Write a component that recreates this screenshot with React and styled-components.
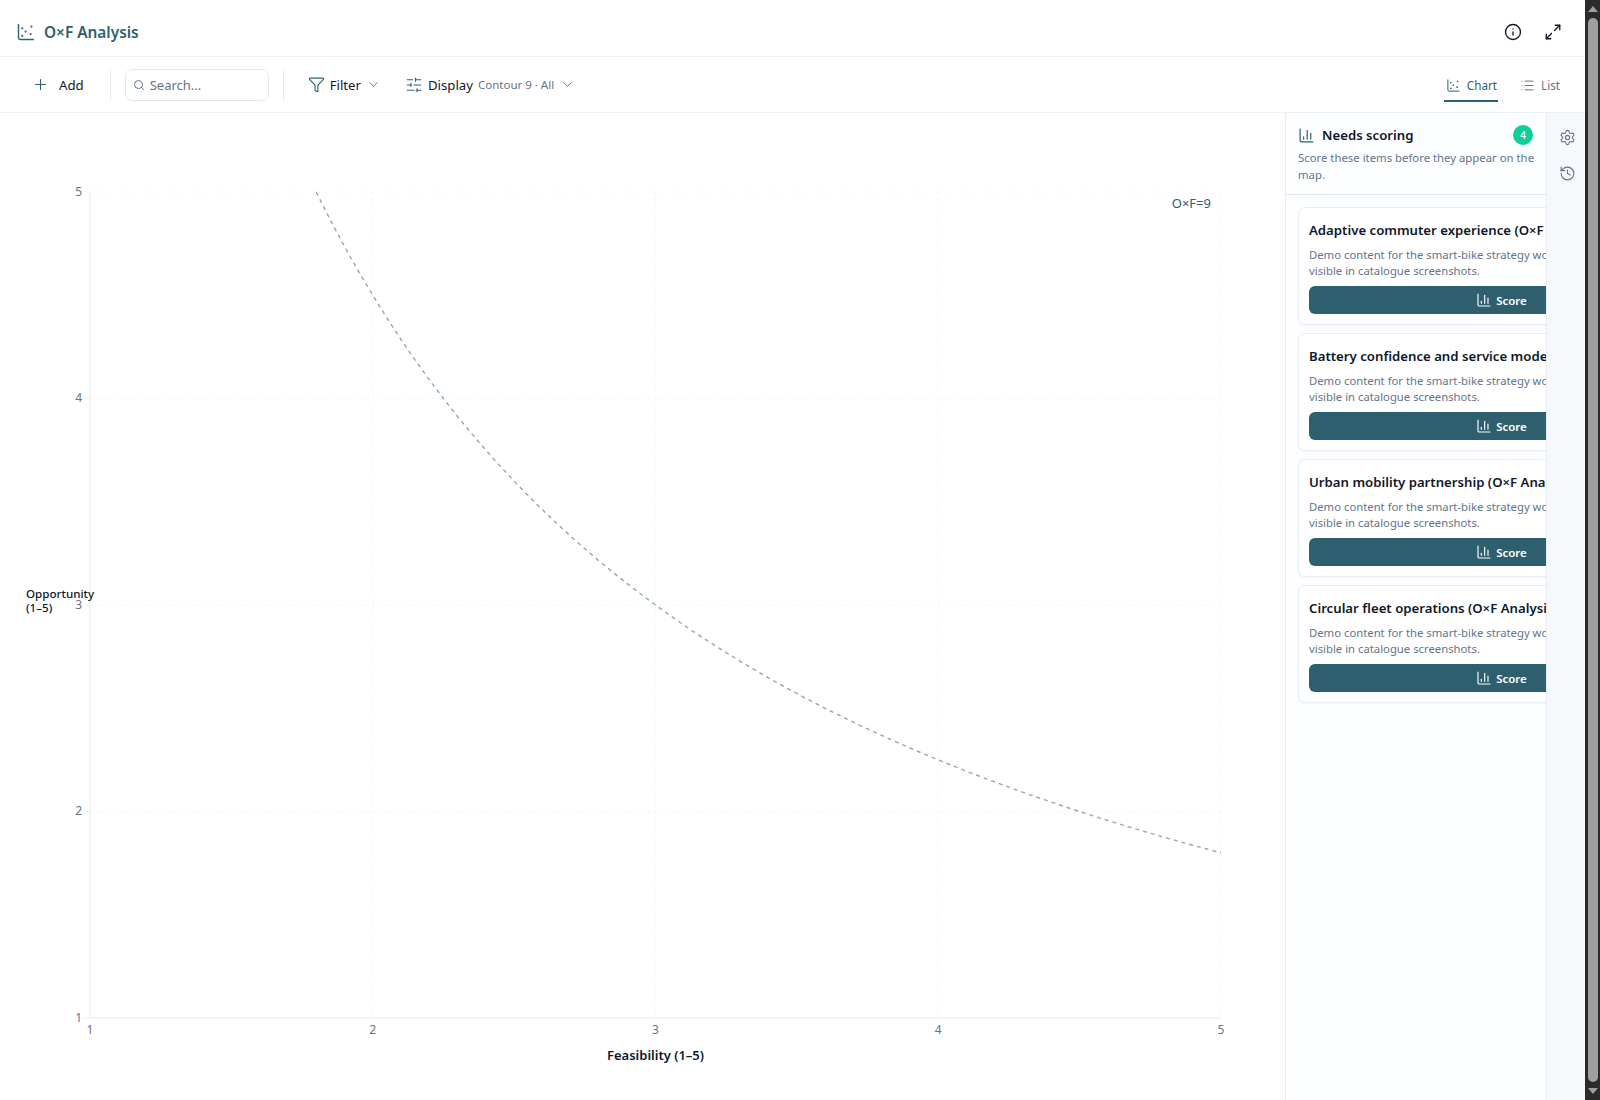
import React from "react";
import styled, { createGlobalStyle } from "styled-components";
import {
  ChartScatter, Info, Maximize2, Plus, Search, Funnel, ChevronDown,
  SlidersHorizontal, List, ChartColumn, Settings, History,
} from "lucide-react";

const Global = createGlobalStyle`
  html, body { margin: 0; padding: 0; background: #fff; }
  body { font-family: "Noto Sans", "Open Sans", sans-serif; color: #0f172a; }
  * { box-sizing: border-box; }
`;

const Page = styled.div`
  display: flex;
  width: 1600px;
  height: 1100px;
  overflow: hidden;
`;
const App_ = styled.div`
  flex: 1;
  min-width: 0;
  display: flex;
  flex-direction: column;
`;
const Header = styled.header`
  height: 57px;
  flex: none;
  display: flex;
  align-items: center;
  padding: 8px 23px 0 16px;
  border-bottom: 1px solid #edf0f5;
`;
const Title = styled.h1`
  margin: 2px 0 0 8px;
  font-size: 15.4px;
  line-height: 22px;
  font-weight: 600;
  color: #2d5f6e;
`;
const HeaderActions = styled.div`
  margin-left: auto;
  display: flex;
  align-items: center;
  gap: 22px;
  color: #111827;
`;
const Toolbar = styled.div`
  height: 56px;
  flex: none;
  display: flex;
  align-items: center;
  padding: 0 25px 0 32px;
  border-bottom: 1px solid #edf0f5;
`;
const ToolButton = styled.button`
  display: flex;
  align-items: center;
  gap: ${p => p.$gap || 5}px;
  margin: ${p => p.$margin || 0};
  padding: 0;
  background: none;
  border: 0;
  font: inherit;
  font-size: 13.2px;
  color: #111827;
`;
const Sub = styled.span`
  font-size: 11.5px;
  color: #64748b;
`;
const Sep = styled.div`
  width: 1px;
  height: 32px;
  background: #e8ecf3;
`;
const SearchBox = styled.div`
  width: 144px;
  height: 32px;
  margin: 0 14px;
  display: flex;
  align-items: center;
  gap: 5px;
  padding: 0 7px;
  border: 1px solid #e2e8f0;
  border-radius: 7px;
  font-size: 13px;
  color: #64748b;
`;
const Tabs = styled.div`
  margin-left: auto;
  display: flex;
  align-self: stretch;
  gap: 22px;
`;
const Tab = styled.div`
  display: flex;
  align-items: center;
  gap: 6px;
  padding: 2px ${p => (p.$active ? 1 : 0)}px 0 ${p => (p.$active ? 2 : 0)}px;
  height: 34px;
  margin-top: 11px;
  font-size: 11.7px;
  color: ${p => (p.$active ? "#2d5f6e" : "#64748b")};
  border-bottom: 2px solid ${p => (p.$active ? "#2d5f6e" : "transparent")};
`;
const Body = styled.div`
  flex: 1;
  min-height: 0;
  display: flex;
`;
const ChartPane = styled.main`
  flex: 1;
  min-width: 0;
`;
const ChartSvg = styled.svg`
  display: block;
  font-family: "Noto Sans", "Open Sans", sans-serif;
`;
const Panel = styled.aside`
  width: 261px;
  flex: none;
  border-left: 1px solid #e8ecf3;
  overflow: hidden;
  background: #fdfeff;
`;
const PanelHead = styled.div`
  height: 82px;
  padding: 11px 13px 0 12px;
  border-bottom: 1px solid #e2e8f0;
`;
const PanelTitle = styled.div`
  display: flex;
  align-items: center;
  gap: 7px;
  height: 22px;
  font-size: 13.2px;
  font-weight: 600;
  color: #0f172a;
  svg { color: #2d5f6e; }
`;
const Badge = styled.span`
  margin-left: auto;
  width: 20px;
  height: 20px;
  border-radius: 50%;
  background: #0ccf9b;
  color: #fff;
  font-size: 10px;
  font-weight: 500;
  display: flex;
  align-items: center;
  justify-content: center;
`;
const PanelDesc = styled.p`
  margin: 4px -4px 0 0;
  font-size: 11.35px;
  line-height: 16.5px;
  color: #64748b;
`;
const Cards = styled.div`
  display: flex;
  flex-direction: column;
  gap: 8px;
  padding: 12px 0 0 12px;
`;
const Card = styled.article`
  width: 407px;
  height: 118px;
  padding: 12px 10px;
  flex: none;
  background: #fff;
  border: 1px solid #e8ecf3;
  border-radius: 7px;
  box-shadow: 0 1px 2px rgba(15, 23, 42, 0.04);
`;
const CardTitle = styled.h3`
  margin: 0;
  font-size: 13.2px;
  line-height: 20px;
  font-weight: 600;
  color: #0f172a;
  white-space: nowrap;
`;
const CardDesc = styled.p`
  margin: 7px 0 7px;
  font-size: 11.3px;
  line-height: 16px;
  color: #64748b;
  white-space: nowrap;
`;
const ScoreButton = styled.button`
  width: 100%;
  height: 28px;
  display: flex;
  align-items: center;
  justify-content: center;
  gap: 4px;
  border: 0;
  border-radius: 6px;
  background: #2d5f6e;
  color: #fff;
  font: inherit;
  font-size: 11.5px;
  font-weight: 600;
`;
const Rail = styled.nav`
  width: 39px;
  flex: none;
  display: flex;
  flex-direction: column;
  align-items: center;
  gap: 19px;
  padding: 16px 0 0 2px;
  background: #f6f8fc;
  border-left: 1px solid #e8ecf3;
  color: #64748b;
`;
const Scrollbar = styled.div`
  width: 15px;
  flex: none;
  display: flex;
  flex-direction: column;
  align-items: center;
  background: #2b2b2b;
`;
const Arrow = styled.div`
  height: 18px;
  flex: none;
  display: flex;
  align-items: center;
  justify-content: center;
  &::before {
    content: "";
    border-left: 5px solid transparent;
    border-right: 5px solid transparent;
    ${p => (p.$down ? "border-top" : "border-bottom")}: 6px solid #9f9f9f;
  }
`;
const Thumb = styled.div`
  flex: 1;
  width: 10px;
  background: #9f9f9f;
  border-radius: 5px;
`;

const X0 = 90, XS = 282.75, Y0 = 905, YS = 206.5;
const px = v => X0 + (v - 1) * XS;
const py = v => Y0 - (v - 1) * YS;
const curve = Array.from({ length: 129 }, (_, i) => {
  const x = 1.8 + (i * 3.2) / 128;
  return `${i ? "L" : "M"}${px(x).toFixed(1)} ${py(9 / x).toFixed(1)}`;
}).join(" ");
const ticks = [1, 2, 3, 4, 5];

function Chart() {
  return (
    <ChartSvg width="1285" height="987" viewBox="0 0 1285 987">
      {ticks.slice(1).map(t => (
        <line key={"gx" + t} x1={px(t)} x2={px(t)} y1={py(5)} y2={py(1)} stroke="#f5f6f9" strokeDasharray="3 3" />
      ))}
      {ticks.slice(1).map(t => (
        <line key={"gy" + t} x1={px(1)} x2={px(5)} y1={py(t)} y2={py(t)} stroke="#f5f6f9" strokeDasharray="3 3" />
      ))}
      <line x1={px(1)} x2={px(1)} y1={py(5)} y2={py(1)} stroke="#edf0f6" strokeWidth="1.5" />
      <line x1={px(1)} x2={px(5)} y1={py(1)} y2={py(1)} stroke="#edf0f6" strokeWidth="1.5" />
      {ticks.map(t => (
        <g key={t} fontSize="12" fill="#64748b">
          <line x1={px(1) - 6} x2={px(1)} y1={py(t)} y2={py(t)} stroke="#edf0f6" />
          <text x={px(1) - 8} y={py(t) + 3.5} textAnchor="end">{t}</text>
          <text x={px(t)} y={py(1) + 16} textAnchor="middle">{t}</text>
        </g>
      ))}
      <path d={curve} fill="none" stroke="#8fa9b0" strokeWidth="1.4" strokeDasharray="4 4" />
      <text x="1211" y="95" textAnchor="end" fontSize="13" fill="#2d5f6e">O×F=9</text>
      <text fontSize="11.6" fontWeight="500" fill="#0f172a">
        <tspan x="26" y="485">Opportunity</tspan>
        <tspan x="26" y="499">(1–5)</tspan>
      </text>
      <text x={px(3)} y="947" textAnchor="middle" fontSize="13" fontWeight="600" fill="#0f172a">Feasibility (1–5)</text>
    </ChartSvg>
  );
}

const items = [
  "Adaptive commuter experience (O×F Analysis)",
  "Battery confidence and service model (O×F Analysis)",
  "Urban mobility partnership (O×F Analysis)",
  "Circular fleet operations (O×F Analysis)",
];

export default function App() {
  return (
    <Page>
      <Global />
      <App_>
        <Header>
          <ChartScatter size={20} color="#2d5f6e" strokeWidth={1.7} />
          <Title>O×F Analysis</Title>
          <HeaderActions>
            <Info size={18} strokeWidth={1.8} />
            <Maximize2 size={18} strokeWidth={1.8} />
          </HeaderActions>
        </Header>
        <Toolbar>
          <ToolButton $gap={10} $margin="0 26px 0 0">
            <Plus size={17} color="#2d5f6e" strokeWidth={1.6} />
            Add
          </ToolButton>
          <Sep />
          <SearchBox>
            <Search size={12} />
            Search...
          </SearchBox>
          <Sep />
          <ToolButton $margin="0 24px 0 24px">
            <Funnel size={17} color="#2d5f6e" strokeWidth={1.6} />
            Filter
            <ChevronDown size={15} color="#64748b" strokeWidth={1.6} />
          </ToolButton>
          <ToolButton $gap={5}>
            <SlidersHorizontal size={18} color="#2d5f6e" strokeWidth={1.5} />
            Display
            <Sub>Contour 9 · All</Sub>
            <ChevronDown size={15} color="#64748b" strokeWidth={1.6} style={{ marginLeft: 1 }} />
          </ToolButton>
          <Tabs>
            <Tab $active>
              <ChartScatter size={15} strokeWidth={1.6} />
              Chart
            </Tab>
            <Tab>
              <List size={15} strokeWidth={1.6} />
              List
            </Tab>
          </Tabs>
        </Toolbar>
        <Body>
          <ChartPane><Chart /></ChartPane>
          <Panel>
            <PanelHead>
              <PanelTitle>
                <ChartColumn size={17} strokeWidth={1.7} />
                Needs scoring
                <Badge>4</Badge>
              </PanelTitle>
              <PanelDesc>Score these items before they appear on the map.</PanelDesc>
            </PanelHead>
            <Cards>
              {items.map(t => (
                <Card key={t}>
                  <CardTitle>{t}</CardTitle>
                  <CardDesc>
                    Demo content for the smart-bike strategy workspace, kept short and<br />
                    visible in catalogue screenshots.
                  </CardDesc>
                  <ScoreButton>
                    <ChartColumn size={16} strokeWidth={1.7} />
                    Score
                  </ScoreButton>
                </Card>
              ))}
            </Cards>
          </Panel>
          <Rail>
            <Settings size={17} strokeWidth={1.6} />
            <History size={17} strokeWidth={1.6} />
          </Rail>
        </Body>
      </App_>
      <Scrollbar>
        <Arrow />
        <Thumb />
        <Arrow $down />
      </Scrollbar>
    </Page>
  );
}
